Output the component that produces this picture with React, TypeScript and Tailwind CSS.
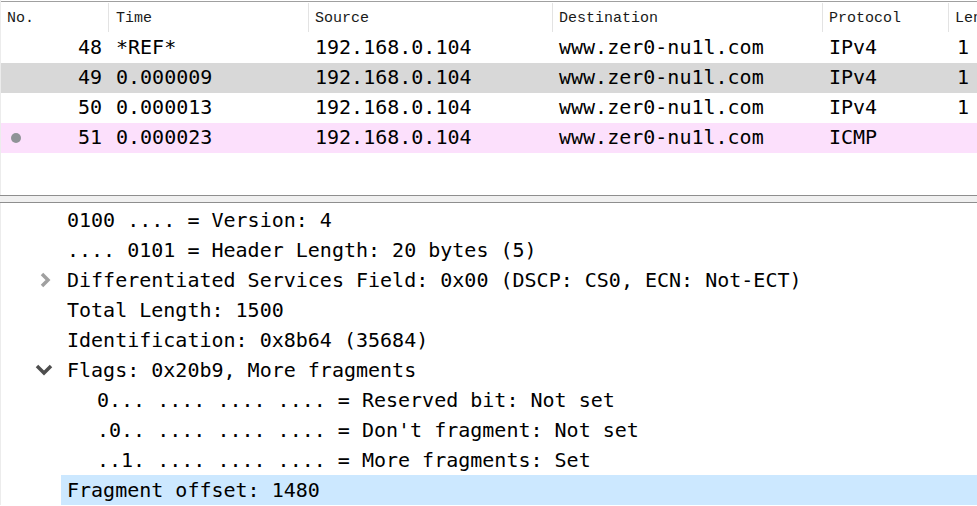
const mono = { fontFamily: '"DejaVu Sans Mono", "Liberation Mono", monospace' };

type Pkt = { no: number; time: string; proto: string; len: string; bg: string; dot?: boolean };

const packets: Pkt[] = [
  { no: 48, time: "*REF*", proto: "IPv4", len: "1", bg: "bg-white" },
  { no: 49, time: "0.000009", proto: "IPv4", len: "1", bg: "bg-[#d8d8d8]" },
  { no: 50, time: "0.000013", proto: "IPv4", len: "1", bg: "bg-white" },
  { no: 51, time: "0.000023", proto: "ICMP", len: "", bg: "bg-[#fce0fc]", dot: true },
];

type Detail = { text: string; indent: number; arrow?: "right" | "down"; selected?: boolean };

const details: Detail[] = [
  { text: "0100 .... = Version: 4", indent: 0 },
  { text: ".... 0101 = Header Length: 20 bytes (5)", indent: 0 },
  { text: "Differentiated Services Field: 0x00 (DSCP: CS0, ECN: Not-ECT)", indent: 0, arrow: "right" },
  { text: "Total Length: 1500", indent: 0 },
  { text: "Identification: 0x8b64 (35684)", indent: 0 },
  { text: "Flags: 0x20b9, More fragments", indent: 0, arrow: "down" },
  { text: "0... .... .... .... = Reserved bit: Not set", indent: 1 },
  { text: ".0.. .... .... .... = Don't fragment: Not set", indent: 1 },
  { text: "..1. .... .... .... = More fragments: Set", indent: 1 },
  { text: "Fragment offset: 1480", indent: 0, selected: true },
];

function Arrow({ dir }: { dir: "right" | "down" }) {
  if (dir === "right") {
    return (
      <svg width="14" height="16" viewBox="0 0 14 16" className="absolute left-[37px] top-[7px]">
        <path d="M4 2 L10 8 L4 14" fill="none" stroke="#a0a0a0" strokeWidth="3.5" />
      </svg>
    );
  }
  return (
    <svg width="18" height="12" viewBox="0 0 18 12" className="absolute left-[34px] top-[9px]">
      <path d="M2 2 L9 9 L16 2" fill="none" stroke="#4e4e4e" strokeWidth="3.5" />
    </svg>
  );
}

export default function App() {
  return (
    <div className="h-[506px] w-[977px] overflow-hidden bg-white text-black">
      {/* PACKET LIST */}
      <div className="h-[195px] border-l border-[#ececec] pt-[1px]">
        <div
          className="flex h-[32px] border-t border-[#a0a0a0] text-[15px] text-[#1a1a1a]"
          style={{ fontFamily: '"Liberation Mono", monospace' }}
        >
          <div className="w-[107px] pl-[6px] pt-[4px] leading-[26px]">No.</div>
          <div className="my-[1px] w-[200px] border-l border-[#e3e3e3] pl-[7px] pt-[3px] leading-[26px]">Time</div>
          <div className="my-[1px] w-[244px] border-l border-[#e3e3e3] pl-[6px] pt-[3px] leading-[26px]">Source</div>
          <div className="my-[1px] w-[270px] border-l border-[#e3e3e3] pl-[6px] pt-[3px] leading-[26px]">Destination</div>
          <div className="my-[1px] w-[126px] border-l border-[#e3e3e3] pl-[6px] pt-[3px] leading-[26px]">Protocol</div>
          <div className="my-[1px] flex-1 overflow-hidden whitespace-nowrap border-l border-[#e3e3e3] pl-[6px] pt-[3px] leading-[26px]">Len</div>
        </div>

        {packets.map((p) => (
          <div key={p.no} className={`flex h-[30px] text-[20px] leading-[28px] ${p.bg}`} style={mono}>
            <div className="relative w-[107px] pr-[6px] text-right">
              {p.dot && <span className="absolute left-[10px] top-[10px] h-[10px] w-[10px] rounded-full bg-[#8f9397]" />}
              {p.no}
            </div>
            <div className="w-[200px] pl-[8px]">{p.time}</div>
            <div className="w-[244px] pl-[7px]">192.168.0.104</div>
            <div className="w-[270px] pl-[7px]">www.zer0-nu1l.com</div>
            <div className="w-[126px] pl-[7px]">{p.proto}</div>
            <div className="flex-1 overflow-hidden whitespace-nowrap pl-[9px]">{p.len}</div>
          </div>
        ))}
      </div>

      {/* SPLITTER */}
      <div className="h-[8px] border-y border-[#8e8e8e] bg-[#f0f0f0]" />

      {/* PACKET DETAILS */}
      <div className="border-l border-[#ececec] pt-[2px] text-[20px] leading-[30px]" style={mono}>
        {details.map((d) => (
          <div key={d.text} className="relative h-[30px] whitespace-nowrap">
            {d.arrow && <Arrow dir={d.arrow} />}
            <div
              className={`ml-[60px] pl-[6px] ${d.indent ? "pl-[36px]" : ""} ${d.selected ? "bg-[#cce8ff]" : ""}`}
            >
              {d.text}
            </div>
          </div>
        ))}
      </div>
    </div>
  );
}
